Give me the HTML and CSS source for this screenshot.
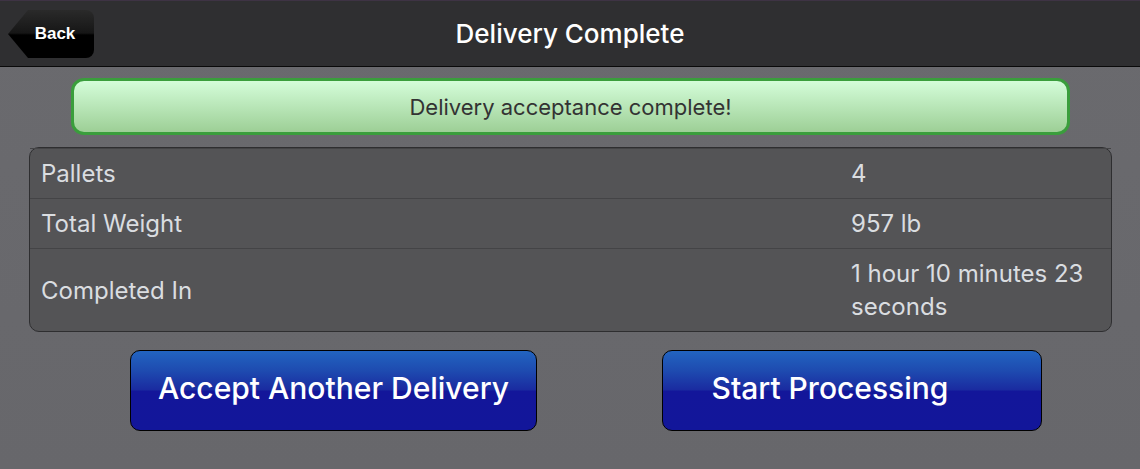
FILE: index.html
```html
<!DOCTYPE html>
<html>
<head>
<meta charset="utf-8">
<link rel="stylesheet" href="styles.css">
</head>
<body>
<header class="topbar">
  <a class="back"><span class="back-label">Back</span></a>
  <h1 class="title">Delivery Complete</h1>
</header>
<main class="content">
  <div class="banner">Delivery acceptance complete!</div>
  <table class="summary">
    <tr><td class="label">Pallets</td><td class="value">4</td></tr>
    <tr><td class="label">Total Weight</td><td class="value">957 lb</td></tr>
    <tr><td class="label">Completed In</td><td class="value">1 hour 10 minutes 23 seconds</td></tr>
  </table>
  <div class="actions">
    <button class="btn btn-accept">Accept Another Delivery</button>
    <button class="btn btn-start">Start Processing</button>
  </div>
</main>
</body>
</html>
```
FILE: styles.css
```css
* { box-sizing: border-box; }
html, body { margin: 0; padding: 0; }
body {
  width: 1140px;
  height: 469px;
  overflow: hidden;
  font-family: Inter, "Noto Sans", sans-serif;
  background: linear-gradient(to bottom, #858589 0px, #6a6a6e 16px, #67676b 100%);
}
.topbar {
  height: 67px;
  background: #2f2f31;
  border-top: 1px solid #3e3344;
  border-bottom: 1px solid #0a0a0a;
  position: relative;
  display: flex;
  align-items: center;
  justify-content: center;
}
.title {
  margin: 0;
  color: #fff;
  font-size: 26px;
  font-weight: 500;
  line-height: 1;
}
.back {
  position: absolute;
  left: 8px;
  top: 9px;
  width: 86px;
  height: 48px;
  display: flex;
  align-items: center;
  justify-content: center;
  padding-left: 8px;
  background: linear-gradient(to bottom, #2a2a2a 0%, #161616 48%, #000 52%, #000 100%);
  clip-path: polygon(20px 0, 100% 0, 100% 100%, 20px 100%, 0 50%);
  border-radius: 0 8px 8px 0;
}
.back-label {
  font-family: "Liberation Sans", Arial, sans-serif;
  font-weight: bold;
  font-size: 17px;
  color: #fff;
}
.content {
  padding: 11px 28px 0 29px;
}
.banner {
  margin: 0 42px 0 42px;
  height: 57px;
  border: 3px solid #3a9e3c;
  border-radius: 13px;
  background: linear-gradient(to bottom, #d4fdd9 0%, #9dcf96 100%);
  color: #333;
  font-size: 22px;
  display: flex;
  align-items: center;
  justify-content: center;
}
.summary {
  margin-top: 12px;
  width: 1083px;
  border-collapse: separate;
  border-spacing: 0;
  background: #545456;
  border: 1px solid #2e2e30;
  border-radius: 10px;
  color: #dadde0;
  font-size: 24px;
  line-height: 33px;
}
.summary td {
  padding: 8px 11px;
  vertical-align: middle;
  border-top: 1px solid #444446;
}
.summary .label { width: 810px; }
.summary .value { padding-right: 14px; }
.actions {
  margin-top: 18px;
  display: flex;
  padding-left: 101px;
  gap: 125px;
}
.btn {
  height: 81px;
  border: 1px solid #000;
  border-radius: 10px;
  color: #fff;
  font-family: Inter, "Noto Sans", sans-serif;
  font-size: 30px;
  font-weight: 500;
  background: linear-gradient(to bottom, #2264c0 0%, #1e4bb0 25%, #1a2ba0 49%, #13169a 51%, #12169a 100%);
  padding: 0 0 5px 0;
}
.btn-accept { width: 407px; }
.btn-start { width: 380px; padding-right: 44px; }
```
